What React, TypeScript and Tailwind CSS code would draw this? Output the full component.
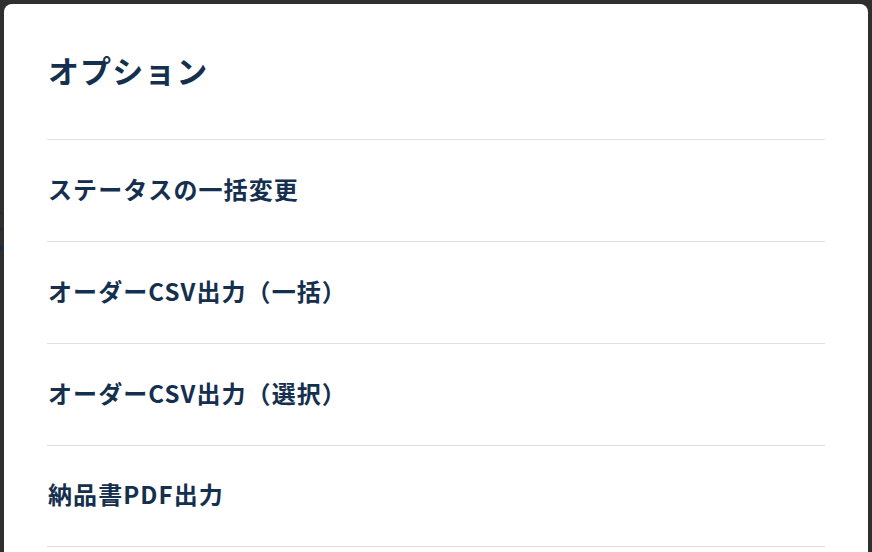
const items = [
  'ステータスの一括変更',
  'オーダーCSV出力（一括）',
  'オーダーCSV出力（選択）',
  '納品書PDF出力',
]

export default function App() {
  return (
    <div
      className="h-[552px] w-[872px] overflow-hidden bg-[#2f2f2f] flex"
      style={{ fontFamily: '"Noto Sans CJK JP", "Noto Sans", sans-serif' }}
    >
      {/* sliver of the page behind the overlay */}
      <div className="w-1 shrink-0 flex flex-col pt-[212px] gap-[14px]">
        <div className="h-[2px] w-[2px] bg-[#1b2b45]" />
        <div className="h-[3px] w-[3px] bg-[#1b2b45]" />
        <div className="h-[6px] w-[3px] bg-[#1b2b45]" />
      </div>

      <div className="mt-1 w-[864px] shrink-0 rounded-t-[8px] bg-white px-[43px] h-[700px]">
        <div className="h-[135px] flex items-center pb-1">
          <h2 className="text-[31px] font-bold text-[#15304f] tracking-[0.035em] leading-none pl-[1px]">
            オプション
          </h2>
        </div>

        <ul>
          {items.map((label) => (
            <li
              key={label}
              className="h-[102px] border-t border-[#e0e0e0] flex items-center pb-1 pl-[1px] text-[24px] font-bold text-[#15304f] tracking-[0.045em] leading-none last:border-b"
            >
              {label}
            </li>
          ))}
        </ul>
      </div>
    </div>
  )
}
